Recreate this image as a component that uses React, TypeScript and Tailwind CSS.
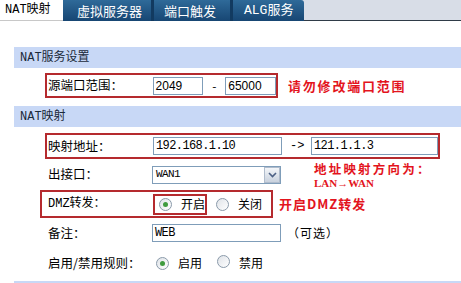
import React from "react";

const cjk = "[font-family:'Liberation_Mono','Noto_Sans_CJK_SC',monospace]";
const sans = "[font-family:'Noto_Sans_CJK_SC',sans-serif]";

function Radio({ checked }: { checked?: boolean }) {
  return (
    <span className="inline-flex h-[13px] w-[13px] items-center justify-center rounded-full border border-[#8a9aaa] bg-gradient-to-br from-[#dfe3e8] to-white">
      {checked && <span className="h-[5px] w-[5px] rounded-full bg-[#3f9b3f]" />}
    </span>
  );
}

function Input({ value, w, mono }: { value: string; w: string; mono?: boolean }) {
  return (
    <div
      className={`flex h-[18px] items-center border border-[#7f9db9] bg-white pl-[2px] text-[12px] text-black ${w} ${
        mono ? "[font-family:'Liberation_Mono',monospace] text-[11px] tracking-[-0.6px]" : "[font-family:'Liberation_Sans',sans-serif]"
      }`}
    >
      {value}
    </div>
  );
}

export default function App() {
  return (
    <div className={`h-[283px] w-[461px] overflow-hidden bg-white text-[12px] text-black ${sans}`}>
      {/* Tabs */}
      <div className="flex h-[21px] border-b border-[#2f3b47] bg-[#d8dde7]">
        <div className={`flex h-[21px] w-[63px] items-center border-b border-[#c8c8c8] bg-white pl-[5px] text-[12px] ${cjk}`}>
          NAT映射
        </div>
        <div className="flex h-[21px] items-end">
          <div className="flex h-[21px] w-[88px] items-center bg-gradient-to-b from-[#2f6a99] to-[#174673] pl-[14px] text-[13px] text-white">
            虚拟服务器
          </div>
          <div className="flex h-[21px] w-[79px] items-center border-l-[3px] border-[#123a60] bg-gradient-to-b from-[#2f6a99] to-[#174673] pl-[10px] text-[13px] text-white">
            端口触发
          </div>
          <div className={`flex h-[21px] w-[74px] items-center rounded-tr-[3px] border-l-[3px] border-[#123a60] bg-gradient-to-b from-[#2f6a99] to-[#174673] pl-[11px] text-[13px] text-white ${cjk}`}>
            ALG服务
          </div>
        </div>
      </div>

      {/* Section 1 */}
      <div className={`ml-[14px] mt-[26px] flex h-[21px] items-center bg-[#c8d8f6] pl-[6px] text-[12px] text-[#1a2a3a] ${cjk}`}>
        NAT服务设置
      </div>

      <div className="mt-[5px] flex h-[25px] items-center">
        <div className="ml-[45px] flex h-[25px] w-[233px] items-center border-2 border-[#b52a2e]">
          <span className="ml-[1px] w-[105px] text-[12.5px]">源端口范围：</span>
          <Input value="2049" w="w-[51px]" />
          <span className="w-[22px] text-center">-</span>
          <Input value="65000" w="w-[51px]" />
        </div>
        <span className="ml-[10px] text-[13px] font-bold tracking-[1.8px] text-[#e3141d]">请勿修改端口范围</span>
      </div>

      {/* Section 2 */}
      <div className={`ml-[14px] mt-[8px] flex h-[21px] items-center bg-[#c8d8f6] pl-[6px] text-[12px] text-[#1a2a3a] ${cjk}`}>
        NAT映射
      </div>

      <div className="ml-[45px] mt-[6px] flex h-[26px] w-[395px] items-center border-2 border-[#b52a2e]">
        <span className="ml-[1px] w-[105px] text-[12.5px]">映射地址：</span>
        <Input value="192.168.1.10" w="w-[129px]" mono />
        <span className={`w-[29px] pl-[8px] ${cjk}`}>-&gt;</span>
        <Input value="121.1.1.3" w="w-[127px]" mono />
      </div>

      <div className="flex h-[31px] items-center">
        <span className="ml-[48px] w-[104px] text-[12.5px]">出接口：</span>
        <div className="flex h-[18px] w-[129px] items-center border border-[#7f9db9] bg-white">
          <span className="flex-1 pl-[3px] [font-family:'Liberation_Mono',monospace] text-[11px] tracking-[-0.6px]">WAN1</span>
          <span className="flex h-[16px] w-[16px] items-center justify-center border border-[#b0bccc] bg-gradient-to-b from-[#f4f6f9] to-[#c9d2de]">
            <svg width="9" height="6" viewBox="0 0 9 6">
              <path d="M1 1 L4.5 4.5 L8 1" fill="none" stroke="#4d6185" strokeWidth="1.6" />
            </svg>
          </span>
        </div>
        <div className="ml-[33px] flex flex-col font-bold text-[#e3141d]">
          <span className="text-[12.5px] leading-[17px] tracking-[2.2px]">地址映射方向为：</span>
          <span className="[font-family:'Liberation_Serif',serif] text-[11px] leading-[13px]">LAN→WAN</span>
        </div>
      </div>

      <div className="flex h-[28px] items-center">
        <div className="ml-[40px] flex h-[28px] w-[233px] items-center border-2 border-[#b52a2e]">
          <span className={`ml-[6px] w-[105px] text-[12px] ${cjk}`}>DMZ转发：</span>
          <div className="flex h-[21px] w-[54px] items-center border-2 border-[#b52a2e] pl-[4px]">
            <Radio checked />
            <span className="ml-[9px]">开启</span>
          </div>
          <span className="ml-[9px] flex items-center">
            <Radio />
            <span className="ml-[9px]">关闭</span>
          </span>
        </div>
        <span className="ml-[6px] text-[13px] font-bold tracking-[1px] text-[#e3141d]">开启DMZ转发</span>
      </div>

      <div className="flex h-[30px] items-center">
        <span className="ml-[48px] w-[104px] text-[12.5px]">备注：</span>
        <Input value="WEB" w="w-[129px]" mono />
        <span className="ml-[6px] tracking-[1px]">（可选）</span>
      </div>

      <div className="flex h-[30px] items-center">
        <span className="ml-[48px] w-[108px] text-[12.5px]">启用/禁用规则：</span>
        <Radio checked />
        <span className="ml-[9px]">启用</span>
        <span className="ml-[15px]"><Radio /></span>
        <span className="ml-[9px]">禁用</span>
      </div>

      <div className="ml-[14px] mt-[3px] h-[4px] bg-[#c8d8f6]" />
    </div>
  );
}
